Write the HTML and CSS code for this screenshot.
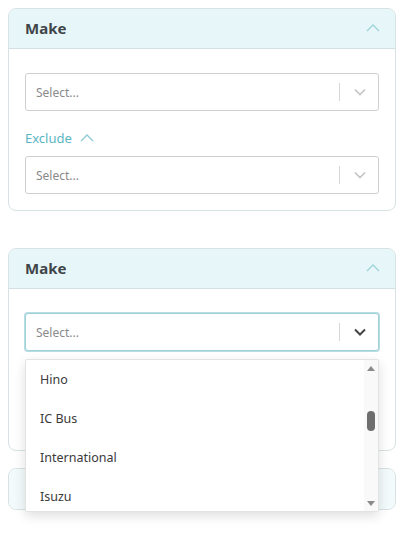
FILE: index.html
```html
<!DOCTYPE html>
<html lang="en">

<head>
    <meta charset="UTF-8">
    <meta name="viewport" content="width=device-width, initial-scale=1.0">
    <title>Filters</title>
    <link rel="stylesheet" href="styles.css">
</head>

<body>
    <!-- Filtro fechado -->
    <div class="filter-card">
        <div class="filter-header">
            <h2>Make</h2>
            <svg class="chevron-up" width="14" height="8" viewBox="0 0 14 8"><path d="M1 7l6-6 6 6" fill="none" stroke="currentColor" stroke-width="1.4"/></svg>
        </div>
        <div class="filter-body">
            <div class="select">
                <span class="placeholder">Select...</span>
                <span class="separator"></span>
                <svg class="chevron-down" width="14" height="8" viewBox="0 0 14 8"><path d="M2 1.5l5 5 5-5" fill="none" stroke="currentColor" stroke-width="1.6"/></svg>
            </div>
            <div class="exclude">
                <span>Exclude</span>
                <svg width="14" height="8" viewBox="0 0 14 8"><path d="M1 7l6-6 6 6" fill="none" stroke="currentColor" stroke-width="1.4"/></svg>
            </div>
            <div class="select">
                <span class="placeholder">Select...</span>
                <span class="separator"></span>
                <svg class="chevron-down" width="14" height="8" viewBox="0 0 14 8"><path d="M2 1.5l5 5 5-5" fill="none" stroke="currentColor" stroke-width="1.6"/></svg>
            </div>
        </div>
    </div>

    <!-- Filtro com o menu aberto -->
    <div class="filter-card">
        <div class="filter-header">
            <h2>Make</h2>
            <svg class="chevron-up" width="14" height="8" viewBox="0 0 14 8"><path d="M1 7l6-6 6 6" fill="none" stroke="currentColor" stroke-width="1.4"/></svg>
        </div>
        <div class="filter-body">
            <div class="select-wrap">
                <div class="select focused">
                    <span class="placeholder">Select...</span>
                    <span class="separator"></span>
                    <svg class="chevron-down" width="14" height="8" viewBox="0 0 14 8"><path d="M2 1.5l5 5 5-5" fill="none" stroke="currentColor" stroke-width="2"/></svg>
                </div>
                <div class="menu">
                    <ul class="menu-list">
                        <li>Hino</li>
                        <li>IC Bus</li>
                        <li>International</li>
                        <li>Isuzu</li>
                    </ul>
                    <div class="scrollbar">
                        <span class="arrow arrow-up"></span>
                        <div class="track"><span class="thumb"></span></div>
                        <span class="arrow arrow-down"></span>
                    </div>
                </div>
            </div>
            <!-- espaço do "Exclude" e do segundo campo, cobertos pelo menu -->
            <div class="body-rest"></div>
        </div>
    </div>

    <!-- Filtro recolhido -->
    <div class="filter-card collapsed">
        <div class="filter-header"></div>
    </div>
</body>

</html>
```

FILE: styles.css
```css
* {
    margin: 0;
    padding: 0;
    box-sizing: border-box;
    font-family: "Noto Sans", sans-serif;
}

body {
    background-color: #fff;
    padding: 8px;
    width: 404px;
}

/* Cartão do filtro */
.filter-card {
    border: 1px solid #d7e2e4;
    border-radius: 8px;
    margin-bottom: 37px;
}

.filter-card + .filter-card {
    margin-bottom: 17px;
}

.filter-header {
    height: 40px;
    display: flex;
    justify-content: space-between;
    align-items: center;
    padding: 0 15px 2px 16px;
    background-color: #e7f6f9;
    border-bottom: 1px solid #d3e0e3;
    border-radius: 7px 7px 0 0;
}

.collapsed .filter-header {
    border-bottom: none;
    border-radius: 7px;
    background-color: #f2fafb;
}

.filter-header h2 {
    font-size: 15px;
    font-weight: 700;
    color: #3f4548;
}

.chevron-up {
    color: #9fd3da;
}

.filter-body {
    padding: 24px 16px 16px;
}

/* Campo de seleção */
.select-wrap {
    position: relative;
}

.select {
    height: 38px;
    display: flex;
    align-items: center;
    border: 1px solid #cfcfcf;
    border-radius: 3px;
    padding-left: 10px;
    background-color: #fff;
}

.select.focused {
    border-color: #9fd1d9;
    box-shadow: 0 0 0 1px #b8dee4;
}

.placeholder {
    flex: 1;
    font-size: 12px;
    color: #8a8a8a;
}

.separator {
    width: 1px;
    height: 18px;
    background-color: #d6d6d6;
}

.chevron-down {
    margin: 0 11px 0 13px;
    color: #c4c4c4;
}

.focused .chevron-down {
    color: #444;
}

.exclude {
    display: flex;
    align-items: center;
    gap: 8px;
    height: 20px;
    margin: 17px 0 8px;
    font-size: 13px;
    color: #5bb6c3;
}

.exclude svg {
    color: #8fcbd4;
}

.body-rest {
    height: 83px;
}

/* Menu aberto */
.menu {
    position: absolute;
    top: 46px;
    left: 0;
    right: 0;
    height: 153px;
    display: flex;
    background-color: #fff;
    border: 1px solid #e3e3e3;
    border-radius: 2px;
    box-shadow: 0 4px 12px rgba(0, 0, 0, 0.13);
    overflow: hidden;
    z-index: 10;
}

.menu-list {
    flex: 1;
    list-style: none;
}

.menu-list li {
    height: 39px;
    line-height: 39px;
    padding-left: 14px;
    font-size: 12.5px;
    color: #3a3a3a;
}

.scrollbar {
    width: 14px;
    display: flex;
    flex-direction: column;
    align-items: center;
    background-color: #f9f9f9;
}

.arrow {
    width: 0;
    height: 0;
    border-left: 4px solid transparent;
    border-right: 4px solid transparent;
}

.arrow-up {
    margin-top: 6px;
    border-bottom: 5px solid #8a8a8a;
}

.arrow-down {
    margin-bottom: 5px;
    border-top: 5px solid #8a8a8a;
}

.track {
    flex: 1;
    display: flex;
    justify-content: center;
}

.thumb {
    width: 8px;
    height: 20px;
    margin-top: 40px;
    border-radius: 4px;
    background-color: #6e6e6e;
}
```
